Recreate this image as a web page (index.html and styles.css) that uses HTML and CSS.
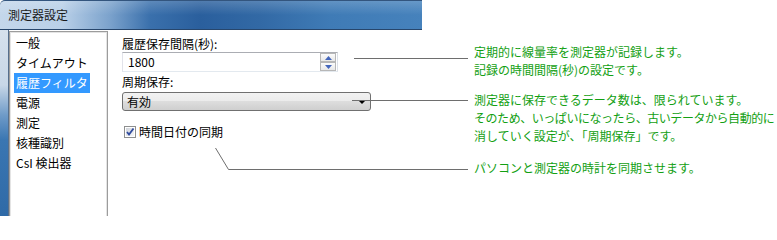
FILE: index.html
```html
<!DOCTYPE html>
<html lang="ja">
<head>
<meta charset="utf-8">
<title>測定器設定</title>
<link rel="stylesheet" href="styles.css">
</head>
<body>
<div class="page">
  <div class="window">
    <div class="titlebar"><span class="title">測定器設定</span></div>
    <div class="win-body">
      <div class="frame-left"></div>
      <ul class="nav">
        <li><span>一般</span></li>
        <li><span>タイムアウト</span></li>
        <li class="selected"><span>履歴フィルタ</span></li>
        <li><span>電源</span></li>
        <li><span>測定</span></li>
        <li><span>核種識別</span></li>
        <li><span>CsI 検出器</span></li>
      </ul>
      <div class="panel">
        <div class="label">履歴保存間隔(秒):</div>
        <div class="spin">
          <span class="spin-value">1800</span>
          <div class="spin-buttons">
            <div class="spin-btn"><svg width="7" height="4" viewBox="0 0 7 4"><path d="M0 4 L3.5 0 L7 4 Z" fill="#4466bb"/></svg></div>
            <div class="spin-btn"><svg width="7" height="4" viewBox="0 0 7 4"><path d="M0 0 L7 0 L3.5 4 Z" fill="#4466bb"/></svg></div>
          </div>
        </div>
        <div class="label label-gap">周期保存:</div>
        <div class="combo">
          <span>有効</span>
          <svg width="8" height="4" viewBox="0 0 8 4"><path d="M0 0 H8 L4 4 Z" fill="#000"/></svg>
        </div>
        <div class="check-row">
          <svg class="checkbox" width="12" height="12" viewBox="0 0 12 12">
            <defs>
              <linearGradient id="cbg" x1="0" y1="0" x2="1" y2="1">
                <stop offset="0" stop-color="#cfd3da"/>
                <stop offset="1" stop-color="#f6f7f9"/>
              </linearGradient>
            </defs>
            <rect x="0.5" y="0.5" width="11" height="11" fill="#fff" stroke="#8e8f8f"/>
            <rect x="2" y="2" width="8" height="8" fill="url(#cbg)"/>
            <path d="M3 6 L5 8.5 L9.5 2.5" fill="none" stroke="#2f4a9e" stroke-width="1.8"/>
          </svg>
          <span>時間日付の同期</span>
        </div>
      </div>
    </div>
  </div>
  <div class="notes">
    <p>定期的に線量率を測定器が記録します。<br>記録の時間間隔(秒)の設定です。</p>
    <p class="g2">測定器に保存できるデータ数は、限られています。<br><span class="tight">そのため、いっぱいになったら、古いデータから自動的に</span><br>消していく設定が、「周期保存」です。</p>
    <p class="g3">パソコンと測定器の時計を同期させます。</p>
  </div>
  <svg class="leaders" width="777" height="216" viewBox="0 0 777 216">
    <path d="M354 58.5 H468" stroke="#6e6e6e" fill="none"/>
    <path d="M352 100.5 H468" stroke="#6e6e6e" fill="none"/>
    <path d="M215.5 148 L228.5 169.5 H468" stroke="#6e6e6e" fill="none"/>
  </svg>
</div>
</body>
</html>
```

FILE: styles.css
```css
html, body {
  margin: 0;
  padding: 0;
  background: #fff;
}

.page {
  position: relative;
  display: flex;
  width: 777px;
  height: 216px;
  overflow: hidden;
  background: #fff;
  font-family: "Noto Sans CJK JP", "Noto Sans", sans-serif;
  font-size: 12px;
  color: #000;
}

.window {
  flex: none;
  width: 422px;
  display: flex;
  flex-direction: column;
}

.titlebar {
  box-sizing: border-box;
  height: 30px;
  display: flex;
  align-items: center;
  padding-left: 8px;
  border-top: 1px solid #33557e;
  border-bottom: 1px solid #27466c;
  border-top-left-radius: 5px;
  background:
    linear-gradient(180deg, rgba(255,255,255,0.18) 0, rgba(255,255,255,0) 50%),
    linear-gradient(90deg, #c4d7eb 0, #b9d0e8 62px, #7ba2cc 110px, #3a70ac 150px, #2a5f9d 200px, #3269a5 260px, #3f7bb6 330px, #4682bc 422px);
}

.title {
  font-size: 12px;
  line-height: 14px;
  color: #1a1a1a;
}

.win-body {
  flex: 1;
  display: flex;
}

.frame-left {
  flex: none;
  box-sizing: border-box;
  width: 9px;
  border-right: 1px solid #566f8c;
  background: linear-gradient(180deg, #d6e1ec 0, #c8d7e7 55px, #6f9bc8 85px, #3a76b2 110px, #2f6aa7 186px);
}

.nav {
  flex: none;
  box-sizing: border-box;
  width: 99px;
  margin: 1px 0 0 0;
  padding: 1px 0 0 4px;
  list-style: none;
  border: 1px solid #9c9c9c;
  border-bottom: none;
  box-shadow: inset 1px 1px 0 #e4e4e4, inset -1px 0 0 #e4e4e4;
  background: #fff;
}

.nav li {
  height: 20px;
  line-height: 20px;
  font-size: 12px;
  white-space: nowrap;
}

.nav li span {
  display: inline-block;
  padding: 0 2px;
  height: 20px;
}

.nav li.selected span {
  background: #3399ff;
  color: #fff;
}

.panel {
  flex: 1;
  display: flex;
  flex-direction: column;
  align-items: flex-start;
  padding: 7px 0 0 14px;
  background: #fff;
}

.label {
  font-size: 12px;
  line-height: 14px;
  white-space: nowrap;
}

.label-gap {
  margin-top: 3px;
}

.spin {
  box-sizing: border-box;
  margin-top: 1px;
  width: 216px;
  height: 20px;
  display: flex;
  align-items: center;
  justify-content: space-between;
  padding-left: 5px;
  border: 1px solid;
  border-color: #abadb3 #dbdfe6 #e3e9ef #e2e3ea;
  background: #fff;
}

.spin-value {
  line-height: 14px;
}

.spin-buttons {
  display: flex;
  flex-direction: column;
  margin-right: 1px;
}

.spin-btn {
  box-sizing: border-box;
  width: 16px;
  height: 9px;
  display: flex;
  align-items: center;
  justify-content: center;
  border: 1px solid #b7b7b7;
  background: linear-gradient(180deg, #fbfbfb, #e8e8e8);
}

.combo {
  box-sizing: border-box;
  margin-top: 3px;
  width: 249px;
  height: 19px;
  display: flex;
  align-items: center;
  justify-content: space-between;
  padding: 0 4px 0 4px;
  border: 1px solid #707070;
  border-radius: 3px;
  background: linear-gradient(180deg, #f2f2f2 0, #ebebeb 50%, #dddddd 50%, #cfcfcf 100%);
  line-height: 14px;
}

.check-row {
  margin-top: 14px;
  margin-left: 2px;
  height: 14px;
  display: flex;
  align-items: center;
  gap: 3px;
  line-height: 14px;
  white-space: nowrap;
}

.checkbox {
  display: block;
  flex: none;
}

.notes {
  flex: 1;
  padding: 43px 0 0 52px;
  font-size: 12px;
  line-height: 18px;
  color: #13a013;
  white-space: nowrap;
}

.notes p {
  margin: 0;
}

.notes .tight {
  letter-spacing: -0.45px;
}

.notes .g2 {
  margin-top: 12px;
}

.notes .g3 {
  margin-top: 14px;
}

.leaders {
  position: absolute;
  left: 0;
  top: 0;
  pointer-events: none;
}
```
